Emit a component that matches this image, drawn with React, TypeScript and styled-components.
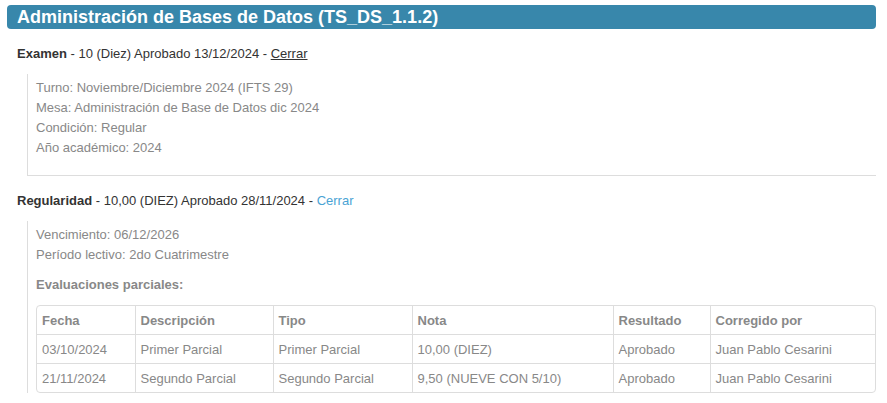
import React from "react";
import styled, { createGlobalStyle } from "styled-components";

const Global = createGlobalStyle`
  html, body { margin: 0; padding: 0; background: #fff; }
  body { font-family: "Liberation Sans", Arial, sans-serif; font-size: 13px; color: #333; }
`;

const Page = styled.div`
  padding: 5px 11px 0 7px;
`;

const TitleBar = styled.h2`
  margin: 0;
  background: #3887ab;
  color: #fff;
  font-size: 18px;
  font-weight: bold;
  line-height: 24px;
  height: 24px;
  padding: 0 10px;
  border-radius: 4px;
  white-space: nowrap;
`;

const Section = styled.div<{ $top: number }>`
  padding-left: 10px;
  margin-top: ${(p) => p.$top}px;
`;

const Heading = styled.div`
  line-height: 20px;
  color: #333;
`;

const Strong = styled.b`
  font-weight: bold;
`;

const Link = styled.a<{ $visited?: boolean }>`
  color: ${(p) => (p.$visited ? "#333" : "#4aa3d4")};
  text-decoration: ${(p) => (p.$visited ? "underline" : "none")};
  cursor: pointer;
`;

const Detail = styled.div<{ $bottom?: boolean }>`
  margin-top: 10px;
  margin-left: 10px;
  border-left: 1px solid #ddd;
  border-bottom: ${(p) => (p.$bottom ? "1px solid #ddd" : "none")};
  padding: 4px 0 ${(p) => (p.$bottom ? 17 : 0)}px 8px;
  color: #888;
`;

const Line = styled.div`
  line-height: 20px;
`;

const SubTitle = styled.div`
  font-weight: bold;
  line-height: 20px;
  margin-top: 10px;
`;

const TableWrap = styled.div`
  margin-top: 10px;
  border: 1px solid #ddd;
  border-radius: 4px;
  overflow: hidden;
`;

const Table = styled.table`
  width: 100%;
  border-collapse: collapse;
  table-layout: fixed;
  color: #888;
`;

const Th = styled.th`
  text-align: left;
  font-weight: bold;
  height: 28px;
  padding: 0 5px;
  border-left: 1px solid #ddd;
  &:first-child { border-left: none; }
`;

const Td = styled.td`
  height: 28px;
  padding: 0 5px;
  border-left: 1px solid #ddd;
  border-top: 1px solid #ddd;
  &:first-child { border-left: none; }
`;

const cols = [98, 138, 139, 201, 97, 165];
const headers = ["Fecha", "Descripción", "Tipo", "Nota", "Resultado", "Corregido por"];
const rows = [
  ["03/10/2024", "Primer Parcial", "Primer Parcial", "10,00 (DIEZ)", "Aprobado", "Juan Pablo Cesarini"],
  ["21/11/2024", "Segundo Parcial", "Segundo Parcial", "9,50 (NUEVE CON 5/10)", "Aprobado", "Juan Pablo Cesarini"],
];

export default function App() {
  return (
    <Page>
      <Global />
      <TitleBar>Administración de Bases de Datos (TS_DS_1.1.2)</TitleBar>
      <Section $top={15}>
        <Heading>
          <Strong>Examen</Strong> - 10 (Diez) Aprobado 13/12/2024 - <Link $visited>Cerrar</Link>
        </Heading>
        <Detail $bottom>
          <Line>Turno: Noviembre/Diciembre 2024 (IFTS 29)</Line>
          <Line>Mesa: Administración de Base de Datos dic 2024</Line>
          <Line>Condición: Regular</Line>
          <Line>Año académico: 2024</Line>
        </Detail>
      </Section>
      <Section $top={15}>
        <Heading>
          <Strong>Regularidad</Strong> - 10,00 (DIEZ) Aprobado 28/11/2024 - <Link>Cerrar</Link>
        </Heading>
        <Detail>
          <Line>Vencimiento: 06/12/2026</Line>
          <Line>Período lectivo: 2do Cuatrimestre</Line>
          <SubTitle>Evaluaciones parciales:</SubTitle>
          <TableWrap>
            <Table>
              <colgroup>
                {cols.map((w, i) => (
                  <col key={i} style={{ width: w }} />
                ))}
              </colgroup>
              <thead>
                <tr>
                  {headers.map((h) => (
                    <Th key={h}>{h}</Th>
                  ))}
                </tr>
              </thead>
              <tbody>
                {rows.map((r, i) => (
                  <tr key={i}>
                    {r.map((c, j) => (
                      <Td key={j}>{c}</Td>
                    ))}
                  </tr>
                ))}
              </tbody>
            </Table>
          </TableWrap>
        </Detail>
      </Section>
    </Page>
  );
}
